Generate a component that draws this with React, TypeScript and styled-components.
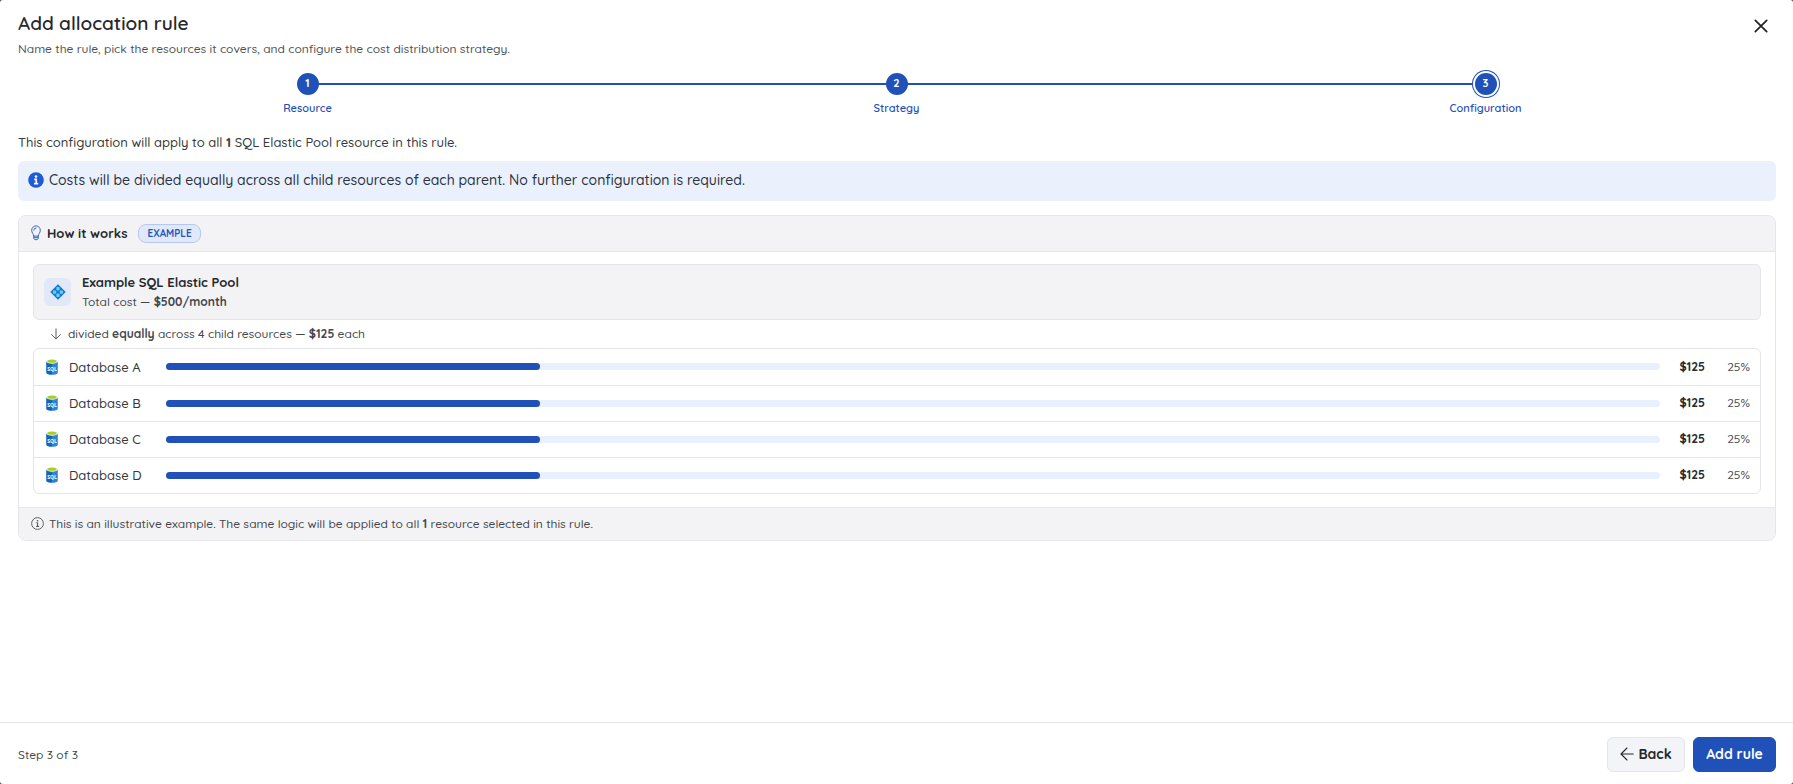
import React from 'react';
import styled, { createGlobalStyle } from 'styled-components';

const blue = '#1f51b8';
const line = '#e5e5ea';
const soft = '#f3f3f6';

const GlobalStyle = createGlobalStyle`
  * { box-sizing: border-box; }
  body { margin: 0; background: #55585c; }
  body, button { font-family: Quicksand, "Open Sans", "Noto Sans", sans-serif; }
  h1, h2, h3, p, ol, ul { margin: 0; padding: 0; font-weight: 500; }
  ol, ul { list-style: none; }
  svg { display: block; flex: none; }
`;

const Dialog = styled.main`
  display: flex;
  flex-direction: column;
  min-height: 100vh;
  background: #fff;
  border-radius: 3px;
  color: #26292d;
  font-size: 13px;
  font-weight: 500;
  line-height: 18px;
`;

const Header = styled.header`
  display: flex;
  justify-content: space-between;
  align-items: flex-start;
  padding: 11px 24px 0 18px;
`;

const Title = styled.h1`
  font-size: 19px;
  line-height: 24px;
  && { font-weight: 600; }
`;

const Subtitle = styled.p`
  margin-top: 5px;
  font-size: 12px;
  color: #4d5156;
`;

const CloseButton = styled.button`
  display: grid;
  place-items: center;
  width: 16px;
  height: 30px;
  padding: 0;
  border: 0;
  background: none;
  color: #1e2124;
  cursor: pointer;
`;

const Stepper = styled.ol`
  display: flex;
  padding: 15px 13px 0;
`;

const Step = styled.li`
  flex: 1;
  display: flex;
  flex-direction: column;
  align-items: center;
  gap: 5px;
  font-size: 11px;
  line-height: 16px;
  font-weight: 600;
  color: ${blue};
`;

const StepTrack = styled.div`
  display: flex;
  align-items: center;
  width: 100%;
`;

const Connector = styled.span<{ $visible: boolean }>`
  flex: 1;
  height: 2px;
  background: ${p => (p.$visible ? blue : 'transparent')};
`;

const StepCircle = styled.span<{ $active: boolean }>`
  z-index: 1;
  width: 22px;
  height: 22px;
  border-radius: 50%;
  background: ${blue};
  color: #fff;
  font-size: 11px;
  font-weight: 700;
  line-height: 21px;
  text-align: center;
  box-shadow: ${p => (p.$active ? `0 0 0 2px #fff, 0 0 0 3px ${blue}` : 'none')};
`;

const Content = styled.section`
  flex: 1;
  padding: 16px 17px 24px 18px;
`;

const Intro = styled.p`
  line-height: 20px;
  color: #34383c;
`;

const Strong = styled.strong`
  font-weight: 700;
`;

const Banner = styled.div`
  display: flex;
  align-items: center;
  gap: 5px;
  height: 40px;
  margin-top: 9px;
  padding: 0 10px 2px;
  border-radius: 6px;
  background: #eaf1fd;
  color: #2c333f;
  font-size: 14px;
`;

const Card = styled.section`
  margin-top: 14px;
  border: 1px solid ${line};
  border-radius: 8px;
  overflow: hidden;
`;

const CardHeader = styled.div`
  display: flex;
  align-items: center;
  gap: 4px;
  height: 36px;
  padding: 0 10px 1px;
  border-bottom: 1px solid ${line};
  background: ${soft};
`;

const CardTitle = styled.h2`
  font-size: 13px;
  && { font-weight: 700; }
`;

const Tag = styled.span`
  height: 19px;
  margin-left: 7px;
  padding: 0 8px;
  border: 1px solid #b3c8f8;
  border-radius: 8px;
  background: #e1e8f7;
  color: #2456c2;
  font-size: 10px;
  line-height: 17px;
  font-weight: 700;
`;

const CardBody = styled.div`
  padding: 12px 14px 13px;
`;

const Pool = styled.div`
  display: flex;
  align-items: center;
  gap: 11px;
  height: 56px;
  padding: 0 10px;
  border: 1px solid ${line};
  border-radius: 6px;
  background: ${soft};
`;

const PoolIcon = styled.span`
  display: grid;
  place-items: center;
  width: 27px;
  height: 28px;
  border-radius: 6px;
  background: #e1e8f7;
`;

const PoolName = styled.h3`
  font-size: 13px;
  && {
    margin-bottom: 2px;
    font-weight: 700;
  }
`;

const Small = styled.p`
  font-size: 12px;
  color: #43474c;
`;

const SplitNote = styled.div`
  display: flex;
  align-items: center;
  gap: 6px;
  height: 28px;
  padding-left: 17px;
`;

const List = styled.ul`
  border: 1px solid ${line};
  border-radius: 6px;
`;

const Row = styled.li`
  display: flex;
  align-items: center;
  height: 36px;
  padding: 0 10px 1px 12px;

  & + & {
    border-top: 1px solid ${line};
  }
`;

const Name = styled.span`
  flex: none;
  width: 108px;
  padding-left: 11px;
  font-size: 13px;
  color: #34383c;
`;

const Bar = styled.div`
  flex: 1;
  height: 7px;
  border-radius: 4px;
  background: #e8effd;
`;

const Fill = styled.div`
  height: 7px;
  border-radius: 4px;
  background: ${blue};
`;

const Amount = styled.span`
  width: 45px;
  text-align: right;
  font-size: 12px;
  font-weight: 700;
`;

const Percent = styled.span`
  width: 45px;
  text-align: right;
  font-size: 12px;
  color: #4d5156;
`;

const CardFooter = styled.div`
  display: flex;
  align-items: center;
  gap: 5px;
  height: 33px;
  padding: 0 12px 1px;
  border-top: 1px solid ${line};
  background: ${soft};
`;

const Footer = styled.footer`
  display: flex;
  align-items: center;
  gap: 8px;
  padding: 14px 17px 12px 18px;
  border-top: 1px solid #e3e4e7;
`;

const StepCount = styled.p`
  flex: 1;
  font-size: 12px;
  color: #43474c;
`;

const Button = styled.button<{ $primary?: boolean }>`
  display: flex;
  align-items: center;
  justify-content: center;
  gap: 4px;
  height: 35px;
  width: ${p => (p.$primary ? 83 : 78)}px;
  padding: 0 0 2px;
  border: 1px solid ${p => (p.$primary ? blue : line)};
  border-radius: 6px;
  background: ${p => (p.$primary ? blue : '#f3f4f7')};
  color: ${p => (p.$primary ? '#fff' : '#26292d')};
  font-size: 14px;
  font-weight: 700;
  cursor: pointer;
`;

const CloseIcon = () => (
  <svg width="14" height="14" viewBox="0 0 14 14" stroke="currentColor" strokeWidth="1.7" strokeLinecap="round">
    <path d="M1.3 1.3l11.4 11.4M12.7 1.3L1.3 12.7" />
  </svg>
);

const InfoSolid = () => (
  <svg width="16" height="16" viewBox="0 0 16 16">
    <circle cx="8" cy="8" r="7.8" fill="#1d5bd8" />
    <circle cx="8" cy="4.5" r="1.3" fill="#fff" />
    <path d="M6.2 7.3h2v4M6 11.6h4.2" stroke="#fff" strokeWidth="1.7" fill="none" />
  </svg>
);

const InfoOutline = () => (
  <svg width="13" height="13" viewBox="0 0 13 13" fill="none" stroke="#4d5156">
    <circle cx="6.5" cy="6.5" r="5.9" strokeWidth="0.9" />
    <circle cx="6.5" cy="3.7" r="0.8" fill="#4d5156" stroke="none" />
    <path d="M5.3 5.7h1.3v3.6M5.1 9.4h3" strokeWidth="1" />
  </svg>
);

const BulbIcon = () => (
  <svg width="14" height="16" viewBox="0 0 14 16" fill="none" stroke="#3a66c4" strokeWidth="1" strokeLinecap="round" strokeLinejoin="round">
    <path d="M4.8 10.8C4.6 9 2.7 8 2.7 5.2a4.3 4.3 0 0 1 8.6 0c0 2.8-1.9 3.8-2.1 5.6z" />
    <path d="M4.8 10.8v2.4c0 .9.8 1.5 2.2 1.5s2.2-.6 2.2-1.5v-2.4M4.9 12.7h4.2M4.8 5.1A2.2 2.2 0 0 1 7 3" />
  </svg>
);

const ArrowIcon = ({ down = false }: { down?: boolean }) =>
  down ? (
    <svg width="12" height="12" viewBox="0 0 12 12" fill="none" stroke="#5b5f64" strokeWidth="1" strokeLinecap="round" strokeLinejoin="round">
      <path d="M6 .8v10M1.5 6.5L6 11l4.5-4.5" />
    </svg>
  ) : (
    <svg width="14" height="14" viewBox="0 0 14 14" fill="none" stroke="currentColor" strokeWidth="1.1" strokeLinecap="round" strokeLinejoin="round">
      <path d="M13.2 7H1M7 1L1 7l6 6" />
    </svg>
  );

const ElasticPoolIcon = () => (
  <svg width="16" height="16" viewBox="0 0 16 16">
    <path d="M8 .3L15.7 8 8 15.7.3 8z" fill="#1b75d1" />
    <g fill="#5fd6f5">
      <rect x="6.4" y="3" width="3.2" height="3.4" rx="0.8" />
      <rect x="6.4" y="9.6" width="3.2" height="3.4" rx="0.8" />
      <rect x="3" y="6.4" width="3.2" height="3.4" rx="0.8" />
      <rect x="9.8" y="6.4" width="3.2" height="3.4" rx="0.8" />
    </g>
  </svg>
);

const SqlIcon = () => (
  <svg width="12" height="16" viewBox="0 0 12 16">
    <path d="M.2 2.5v11.2c0 1.2 2.6 2.1 5.8 2.1V2.5z" fill="#1465b8" />
    <path d="M6 15.8c3.2 0 5.8-.9 5.8-2.1V2.5H6z" fill="#2e83d2" />
    <ellipse cx="6" cy="2.5" rx="5.8" ry="2.2" fill="#f2f7e8" />
    <ellipse cx="6" cy="2.2" rx="4.6" ry="1.6" fill="#a6ce2e" />
    <text x="6" y="11.6" textAnchor="middle" fill="#fff" fontFamily="Open Sans, sans-serif" fontSize="5" fontWeight="700">SQL</text>
  </svg>
);

const steps = ['Resource', 'Strategy', 'Configuration'];
const databases = ['A', 'B', 'C', 'D'].map(id => ({ name: `Database ${id}`, amount: '$125', share: 25 }));

export default function App() {
  return (
    <>
      <GlobalStyle />
      <Dialog>
        <Header>
          <div>
            <Title>Add allocation rule</Title>
            <Subtitle>Name the rule, pick the resources it covers, and configure the cost distribution strategy.</Subtitle>
          </div>
          <CloseButton aria-label="Close"><CloseIcon /></CloseButton>
        </Header>
        <Stepper>
          {steps.map((label, i) => (
            <Step key={label}>
              <StepTrack>
                <Connector $visible={i > 0} />
                <StepCircle $active={i === 2}>{i + 1}</StepCircle>
                <Connector $visible={i < 2} />
              </StepTrack>
              {label}
            </Step>
          ))}
        </Stepper>
        <Content>
          <Intro>This configuration will apply to all <Strong>1</Strong> SQL Elastic Pool resource in this rule.</Intro>
          <Banner>
            <InfoSolid />
            <p>Costs will be divided equally across all child resources of each parent. No further configuration is required.</p>
          </Banner>
          <Card>
            <CardHeader>
              <BulbIcon />
              <CardTitle>How it works</CardTitle>
              <Tag>EXAMPLE</Tag>
            </CardHeader>
            <CardBody>
              <Pool>
                <PoolIcon><ElasticPoolIcon /></PoolIcon>
                <div>
                  <PoolName>Example SQL Elastic Pool</PoolName>
                  <Small>Total cost — <Strong>$500/month</Strong></Small>
                </div>
              </Pool>
              <SplitNote>
                <ArrowIcon down />
                <Small>divided <Strong>equally</Strong> across 4 child resources — <Strong>$125</Strong> each</Small>
              </SplitNote>
              <List>
                {databases.map(db => (
                  <Row key={db.name}>
                    <SqlIcon />
                    <Name>{db.name}</Name>
                    <Bar><Fill style={{ width: `${db.share}%` }} /></Bar>
                    <Amount>{db.amount}</Amount>
                    <Percent>{db.share}%</Percent>
                  </Row>
                ))}
              </List>
            </CardBody>
            <CardFooter>
              <InfoOutline />
              <Small>This is an illustrative example. The same logic will be applied to all <Strong>1</Strong> resource selected in this rule.</Small>
            </CardFooter>
          </Card>
        </Content>
        <Footer>
          <StepCount>Step 3 of 3</StepCount>
          <Button><ArrowIcon />Back</Button>
          <Button $primary>Add rule</Button>
        </Footer>
      </Dialog>
    </>
  );
}
